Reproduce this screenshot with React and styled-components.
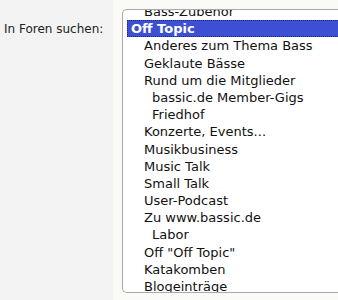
import styled, { createGlobalStyle } from "styled-components";

const GlobalStyle = createGlobalStyle`
  body {
    margin: 0;
    background: #fafaf6;
    font-family: "DejaVu Sans", Verdana, sans-serif;
  }
`;

const Row = styled.div`
  display: flex;
  height: 300px;
  overflow: hidden;
`;

const LabelCell = styled.div`
  width: 113px;
  flex-shrink: 0;
  background: #f3f3f3;
  padding: 22px 0 0 4px;
  box-sizing: border-box;
  font-size: 12px;
  color: #222;
`;

const FieldCell = styled.div`
  flex: 1;
  padding: 9px 0 0 9px;
  min-width: 0;
`;

const ListBox = styled.div`
  height: 284px;
  width: 240px;
  box-sizing: border-box;
  border: 1px solid #a9a9a9;
  border-right: none;
  border-radius: 5px 0 0 5px;
  background: #fff;
  overflow: hidden;
  padding-left: 4px;
`;

const Options = styled.ul`
  list-style: none;
  margin: -7px 0 0;
  padding: 0;
  font-size: 13px;
  color: #111;
`;

const Option = styled.li`
  height: 17.2px;
  line-height: 17.2px;
  white-space: nowrap;
  padding-left: ${p => [4, 17, 25][p.level]}px;
  background: ${p => (p.selected ? "#3d50d4" : "transparent")};
  color: ${p => (p.selected ? "#fff" : "inherit")};
  font-weight: ${p => (p.selected ? "bold" : "normal")};
  outline: ${p => (p.selected ? "1px dotted #1c2a8c" : "none")};
  outline-offset: -1px;
`;

const forums = [
  { name: "Bass-Zubehör", level: 1 },
  { name: "Off Topic", level: 0, selected: true },
  { name: "Anderes zum Thema Bass", level: 1 },
  { name: "Geklaute Bässe", level: 1 },
  { name: "Rund um die Mitglieder", level: 1 },
  { name: "bassic.de Member-Gigs", level: 2 },
  { name: "Friedhof", level: 2 },
  { name: "Konzerte, Events...", level: 1 },
  { name: "Musikbusiness", level: 1 },
  { name: "Music Talk", level: 1 },
  { name: "Small Talk", level: 1 },
  { name: "User-Podcast", level: 1 },
  { name: "Zu www.bassic.de", level: 1 },
  { name: "Labor", level: 2 },
  { name: "Off \"Off Topic\"", level: 1 },
  { name: "Katakomben", level: 1 },
  { name: "Blogeinträge", level: 1 },
];

export default function App() {
  return (
    <>
      <GlobalStyle />
      <Row>
        <LabelCell>In Foren suchen:</LabelCell>
        <FieldCell>
          <ListBox>
            <Options>
              {forums.map(f => (
                <Option key={f.name} level={f.level} selected={f.selected}>
                  {f.name}
                </Option>
              ))}
            </Options>
          </ListBox>
        </FieldCell>
      </Row>
    </>
  );
}
